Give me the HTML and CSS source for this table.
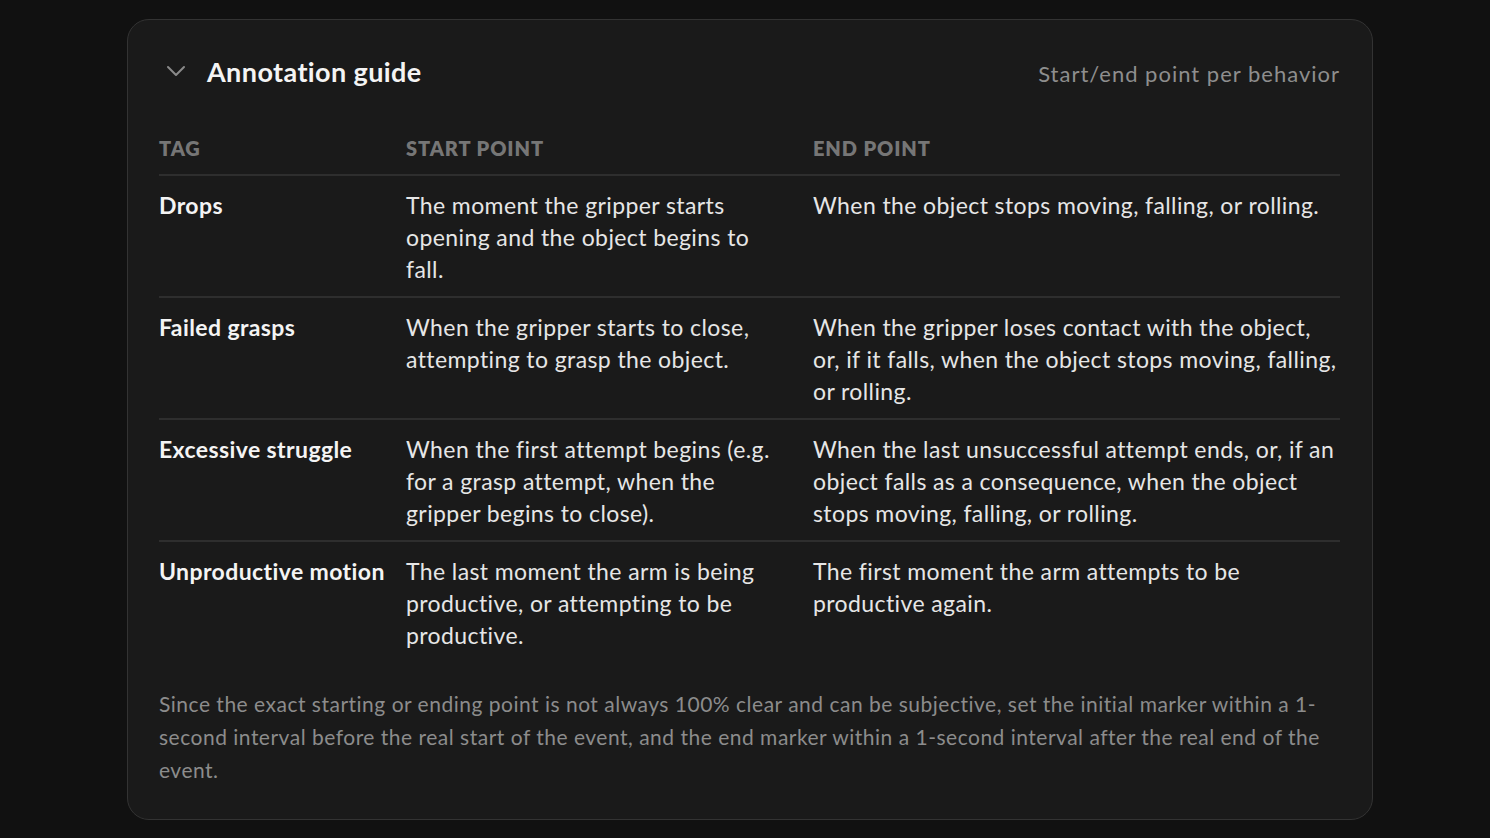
FILE: index.html
```html
<!DOCTYPE html>
<html lang="en">
<head>
    <meta charset="UTF-8">
    <meta name="viewport" content="width=device-width, initial-scale=1.0">
    <title>Annotation guide</title>
    <link rel="stylesheet" href="styles.css">
</head>
<body>
    <div class="guide">
        <div class="guide-header">
            <div class="guide-title">
                <svg class="chevron" width="20" height="12" viewBox="0 0 20 12" fill="none">
                    <path d="M2 2 L10 10 L18 2" stroke="#8a8a8a" stroke-width="2" stroke-linecap="round" stroke-linejoin="round"/>
                </svg>
                <h2>Annotation guide</h2>
            </div>
            <div class="guide-meta">Start/end point per behavior</div>
        </div>
        <table class="guide-table">
            <thead>
                <tr>
                    <th class="col-tag">Tag</th>
                    <th class="col-start">Start point</th>
                    <th class="col-end">End point</th>
                </tr>
            </thead>
            <tbody>
                <tr>
                    <td class="tag">Drops</td>
                    <td>The moment the gripper starts opening and the object begins to fall.</td>
                    <td>When the object stops moving, falling, or rolling.</td>
                </tr>
                <tr>
                    <td class="tag">Failed grasps</td>
                    <td>When the gripper starts to close, attempting to grasp the object.</td>
                    <td>When the gripper loses contact with the object, or, if it falls, when the object stops moving, falling, or rolling.</td>
                </tr>
                <tr>
                    <td class="tag">Excessive struggle</td>
                    <td>When the first attempt begins (e.g. for a grasp attempt, when the gripper begins to close).</td>
                    <td>When the last unsuccessful attempt ends, or, if an object falls as a consequence, when the object stops moving, falling, or rolling.</td>
                </tr>
                <tr>
                    <td class="tag">Unproductive motion</td>
                    <td>The last moment the arm is being productive, or attempting to be productive.</td>
                    <td>The first moment the arm attempts to be productive again.</td>
                </tr>
            </tbody>
        </table>
        <p class="guide-note">Since the exact starting or ending point is not always 100% clear and can be subjective, set the initial marker within a 1-second interval before the real start of the event, and the end marker within a 1-second interval after the real end of the event.</p>
    </div>
</body>
</html>
```

FILE: styles.css
```css
body {
    margin: 0;
    background: #111111;
    font-family: Lato, "Open Sans", sans-serif;
    color: #e4e4e4;
}
.guide {
    width: 1181px;
    margin: 19px 0 0 127px;
    padding: 28px 32px 33px 31px;
    background: #1a1a1a;
    border: 1px solid #333333;
    border-radius: 22px;
}
.guide-header {
    display: flex;
    justify-content: space-between;
    align-items: center;
    height: 46px;
}
.guide-title {
    display: flex;
    align-items: center;
    gap: 21px;
}
.chevron {
    margin-left: 7px;
}
.guide-title h2 {
    margin: 0;
    font-size: 27px;
    font-weight: 700;
    letter-spacing: 0.4px;
    color: #f4f4f4;
}
.guide-meta {
    font-size: 22px;
    letter-spacing: 1px;
    color: #8e8e8e;
    margin-top: 4px;
}
.guide-table {
    width: 100%;
    border-collapse: collapse;
    margin-top: 42px;
}
.guide-table th {
    text-align: left;
    text-transform: uppercase;
    font-size: 20px;
    line-height: 24px;
    font-weight: 800;
    letter-spacing: 0.9px;
    color: #767676;
    padding: 0 20px 14px 0;
    border-bottom: 2px solid #2e2e2e;
}
.col-tag { width: 227px; }
.col-start { width: 387px; }
.guide-table td {
    vertical-align: top;
    font-size: 23px;
    line-height: 32px;
    letter-spacing: 0.4px;
    color: #e6e6e6;
    padding: 13px 20px 11px 0;
    border-bottom: 2px solid #2e2e2e;
}
.guide-table td:last-child {
    padding-right: 0;
}
.guide-table tbody tr:last-child td {
    border-bottom: none;
}
.guide-table td.tag {
    font-weight: 700;
    color: #f4f4f4;
}
.guide-note {
    margin: 25px 0 0;
    font-size: 21px;
    line-height: 33px;
    letter-spacing: 0.5px;
    color: #8c8c8c;
}
```
